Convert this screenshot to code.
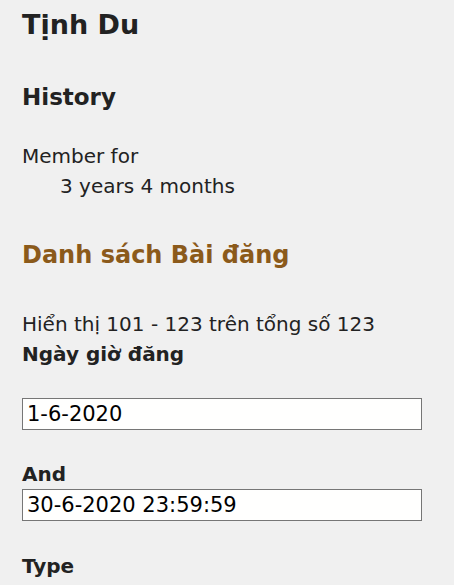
export default function App() {
    return (
        <div className="min-h-[585px] bg-[#f0f0f0] px-[22px] text-[#222222] font-['DejaVu_Sans',Verdana,sans-serif]">
            <h1 className="pt-[8px] text-[27px] font-bold leading-[34px]">Tịnh Du</h1>

            <h2 className="mt-[40px] text-[23px] font-bold leading-[30px]">History</h2>
            <dl className="mt-[29px] text-[20px] leading-[30px]">
                <dt>Member for</dt>
                <dd className="ml-[38px]">3 years 4 months</dd>
            </dl>

            <h2 className="mt-[39px] text-[24px] font-bold leading-[30px] text-[#8b5a1b]">Danh sách Bài đăng</h2>

            <p className="mt-[39px] text-[20px] leading-[30px]">Hiển thị 101 - 123 trên tổng số 123</p>
            <label className="block text-[20px] font-bold leading-[30px]">Ngày giờ đăng</label>
            <input
                className="mt-[29px] block h-[32px] w-[400px] border border-[#767676] bg-[#fffffe] px-[4px] text-[21px] text-black"
                defaultValue="1-6-2020"
            />

            <label className="mt-[29px] block text-[20px] font-bold leading-[30px]">And</label>
            <input
                className="block h-[32px] w-[400px] border border-[#767676] bg-[#fffffe] px-[4px] text-[21px] text-black"
                defaultValue="30-6-2020 23:59:59"
            />

            <label className="mt-[30px] block text-[20px] font-bold leading-[30px]">Type</label>
        </div>
    );
}
